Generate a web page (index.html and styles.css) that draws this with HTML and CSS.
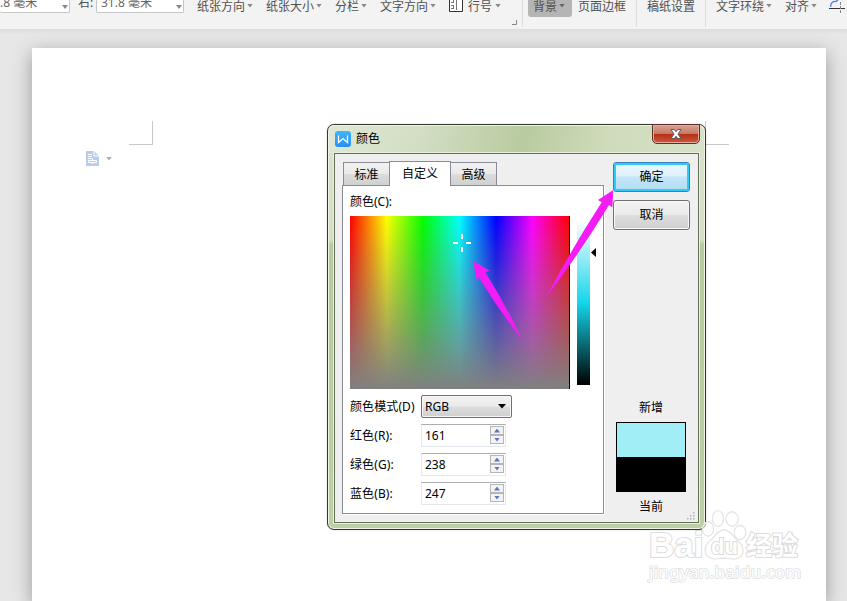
FILE: index.html
```html
<!DOCTYPE html>
<html lang="zh-CN">
<head>
<meta charset="utf-8">
<title>颜色</title>
<link rel="stylesheet" href="styles.css">
</head>
<body>
<header class="ribbon">
  <div class="measure first"><span>.8 毫米</span><i class="caret"></i></div>
  <span class="side">右:</span>
  <div class="measure"><span>31.8 毫米</span><i class="caret"></i></div>
  <span class="item">纸张方向<i class="caret"></i></span>
  <span class="item">纸张大小<i class="caret"></i></span>
  <span class="item">分栏<i class="caret"></i></span>
  <span class="item">文字方向<i class="caret"></i></span>
  <span class="item lines"><svg width="15" height="13" viewBox="0 0 15 13"><path d="M.5 0V12.5H13.5V0" fill="#fff" stroke="#333"/><path d="M2 .5H5M4.500 0V3M2 3.500H5M2 6.500H5M2 9.500H5M4.500 6V10M7.500 0V11" fill="none" stroke="#777"/></svg>行号<i class="caret"></i><svg class="launcher" width="6" height="6" viewBox="0 0 6 6"><path d="M0 4.500H4.500V0" fill="none" stroke="#888"/></svg></span>
  <i class="sep"></i>
  <span class="item active">背景<i class="caret"></i></span>
  <span class="item">页面边框</span>
  <i class="sep"></i>
  <span class="item">稿纸设置</span>
  <i class="sep"></i>
  <span class="item">文字环绕<i class="caret"></i></span>
  <span class="item">对齐<i class="caret"></i></span>
  <svg width="18" height="15" viewBox="0 0 18 15"><path d="M1.500 7C1.500 3 4 1 7 1.500L9 0" fill="none" stroke="#4a83d4" stroke-width="1.300"/><path d="M0 8.500H16" stroke="#333"/><path d="M11.500 2V13" stroke="#888" stroke-dasharray="3 1"/></svg>
</header>

<main class="workspace">
  <section class="sheet">
    <div class="marks"><i class="mark left"></i><i class="mark right"></i></div>
    <div class="paste">
      <svg width="13" height="15" viewBox="0 0 13 15"><path d="M0 0H8L13 5V15H0Z" fill="#b8cdec"/><path d="M8 0V5H13M2 3.500H6M2 5.500H6M2 7.500H6M2.500 9.500H10.500V11.500H2.500ZM6.500 8V9M6.500 12V13" fill="none" stroke="#fff"/></svg>
      <i class="caret"></i>
    </div>
  </section>
</main>

<section class="dialog">
  <div class="titlebar">
    <svg width="16" height="16" viewBox="0 0 16 16"><defs><linearGradient id="logo" x2="0" y2="1"><stop stop-color="#41b5fa"/><stop offset="1" stop-color="#258ff8"/></linearGradient></defs><rect width="16" height="16" rx="3" fill="url(#logo)"/><path d="M3.500 4.500V11.500L8 7.500L12.500 11.500V4.500" fill="none" stroke="#fff" stroke-width="1.300"/></svg>
    <h1>颜色</h1>
    <div class="close"><svg width="12" height="10" viewBox="0 0 12 10"><path d="M1 .500H4.200L6 2.700L7.800 .500H11L8 5L11 9.500H7.800L6 7.300L4.200 9.500H1L4 5Z" fill="#fff" stroke="#555966"/></svg></div>
  </div>
  <div class="client">
    <div class="tabbed">
      <div class="tabs"><span class="tab">标准</span><span class="tab selected">自定义</span><span class="tab">高级</span></div>
      <div class="panel">
        <div class="caption">颜色(C):</div>
        <div class="picker">
          <div class="spectrum"><svg class="cross" width="18" height="18" viewBox="0 0 18 18"><path d="M9 0V5M9 13V18M0 9H5M13 9H18" stroke="#fff" stroke-width="2"/></svg></div>
          <div class="shade"></div>
          <svg class="pointer" width="5" height="9" viewBox="0 0 5 9"><path d="M5 0V9L0 4.500Z"/></svg>
        </div>
        <div class="form">
          <label>颜色模式(D)</label><div class="select">RGB<svg width="8" height="5" viewBox="0 0 8 5"><path d="M0 0H8L4 4.500Z"/></svg></div>
          <label>红色(R):</label><div class="spin">161<span class="steps"><i class="up"></i><i class="down"></i></span></div>
          <label>绿色(G):</label><div class="spin">238<span class="steps"><i class="up"></i><i class="down"></i></span></div>
          <label>蓝色(B):</label><div class="spin">247<span class="steps"><i class="up"></i><i class="down"></i></span></div>
        </div>
      </div>
    </div>
    <div class="actions">
      <div class="button primary">确定</div>
      <div class="button">取消</div>
      <div class="preview">
        <span>新增</span>
        <div class="swatch"></div>
        <span>当前</span>
      </div>
    </div>
    <svg class="grip" width="8" height="8" viewBox="0 0 8 8" fill="#b5b5b5"><path d="M6 0h1.500v1.500H6zM3 3h1.500v1.500H3zM6 3h1.500v1.500H6zM0 6h1.500v1.500H0zM3 6h1.500v1.500H3zM6 6h1.500v1.500H6z"/></svg>
  </div>
</section>

<svg class="arrows" width="847" height="601" viewBox="0 0 847 601" fill="#f41cf4">
  <path d="M473.500 261L489.700 270.700L485.300 272.300Q506 305 522 339.500Q498 309 479 277.700L476 280.300Z"/>
  <path d="M613.300 190L612.300 207.500L609 205Q580 253 545.500 298Q571 250 601.700 202.300L598 200Z"/>
</svg>

<div class="watermark">
  <svg class="paw" width="46" height="50" viewBox="0 0 46 50" fill="#fff" fill-opacity=".55" stroke="#dcdcdc" stroke-width="1.300"><ellipse cx="6" cy="19" rx="5.500" ry="7"/><ellipse cx="16" cy="8.500" rx="5.500" ry="7.700"/><ellipse cx="30" cy="9" rx="6" ry="7"/><ellipse cx="38" cy="22.500" rx="5.700" ry="7"/><path d="M22 20C16 20 14 26 8 31C2 36 1 45 9 48C14 50 18 48 22 48C27 48 31 50 36 48C43 45 42 36 36 31C30 26 28 20 22 20Z"/></svg>
  <div class="brand"><b class="bai">Bai</b><b class="du">du</b><b class="exp">经验</b></div>
  <div class="url">jingyan.baidu.com</div>
</div>
</body>
</html>
```

FILE: styles.css
```css
* { box-sizing: border-box; }
body {
  margin: 0;
  width: 847px;
  height: 601px;
  overflow: hidden;
  background: #e7e7e7;
  font: 12px/16px "Noto Sans", "Noto Sans CJK SC", sans-serif;
  color: #000;
}
svg { display: block; flex: none; }

.caret {
  flex: none;
  width: 6px;
  height: 4px;
  background: #888;
  clip-path: polygon(0 0, 100% 0, 50% 100%);
}

/* Ribbon */
.ribbon {
  display: grid;
  grid-template-columns: 78px 19px 100px 69px 69px 45px 69px 73px 6px 50px 58px 11px 58px 11px 69px 44px 18px;
  align-items: start;
  height: 29px;
  background: #f3f3f3;
  color: #505050;
  white-space: nowrap;
}
.item { display: flex; align-items: center; gap: 2px; height: 16px; margin-top: -1px; }
.item .caret { margin-top: -3px; }
.measure {
  display: flex;
  justify-content: space-between;
  width: 88px;
  height: 13px;
  margin-left: -1px;
  padding-right: 4px;
  padding-left: 4px;
  background: #fff;
  border: 1px solid #c6c6c6;
  border-top: 0;
  border-radius: 0 0 2px 2px;
  color: #666;
}
.measure span, .side { margin-top: -5px; }
.measure .caret { margin-top: 5px; margin-right: -3px; }
.measure.first { width: 70px; margin-left: 0; padding-left: 0; border-left: 0; }
.lines { gap: 3px; }
.lines > svg:first-child { margin: -3px 1px 0 0; }
.launcher { align-self: end; margin: 0 0 -11px 8px; }
.sep { width: 1px; height: 27px; background: #dedede; }
.active {
  width: 44px;
  height: 18px;
  padding: 0 0 2px 5px;
  background: #b5b5b5;
  border-radius: 0 0 3px 3px;
}
.active .caret { background: #666; }

/* Document */
.workspace {
  height: 572px;
  padding: 19px 21px 0 32px;
  overflow: hidden;
  background: linear-gradient(#dcdcdc, #e7e7e7 5px);
}
.sheet { height: 553px; padding-top: 73px; background: #fff; box-shadow: 0 5px 18px #999; }
.marks { display: flex; justify-content: space-between; padding: 0 97px; }
.mark { width: 24px; height: 24px; border: 0 solid #c8c8c8; border-bottom-width: 1px; }
.left { border-right-width: 1px; }
.right { border-left-width: 1px; }
.paste { display: flex; align-items: center; gap: 7px; padding: 6px 0 0 54px; }
.paste .caret { background: #aaa; }

/* Color dialog */
.dialog {
  position: absolute;
  left: 327px;
  top: 124px;
  width: 379px;
  height: 406px;
  padding: 0 6px;
  background: linear-gradient(#d9e3cb, #d5dfc6 115px, #b8cb9e 119px, #bdcfa4);
  border: 1px solid #34382f;
  border-radius: 7px;
  box-shadow: inset 0 0 0 1px #edf3e5, 0 0 1px #777;
}
.titlebar {
  display: flex;
  align-items: center;
  height: 28px;
  margin: 0 -5px;
  padding: 0 5px 0 6px;
  border-radius: 6px 6px 0 0;
  background: linear-gradient(100deg, #dfe8d5 0, #d3dec4 24%, #b9cba0 52%, #cfdbbb 74%, #d7e1c9);
  box-shadow: inset 0 1px #edf3e5;
}
h1 { margin: -1px 0 0 5px; font-size: 12px; line-height: 16px; font-weight: 400; }
.close {
  align-self: start;
  display: grid;
  place-items: center;
  width: 48px;
  height: 20px;
  margin: -1px -1px 0 auto;
  border: 1px solid #5c302a;
  border-radius: 0 0 5px 5px;
  background: linear-gradient(#dba091, #c87b68 47%, #b52f14 51%, #ce593b);
  box-shadow: inset 0 0 0 1px #e3aaa0;
}
.client {
  position: relative;
  display: flex;
  gap: 9px;
  height: 370px;
  padding: 7px;
  background: #efefef;
  border: 1px solid #65705a;
  box-shadow: 0 0 0 1px #e7efdd;
}
.tabbed { width: 262px; }
.tabs { display: flex; align-items: flex-end; height: 24px; }
.tab {
  width: 47px;
  height: 23px;
  border: 1px solid #8b8b98;
  border-bottom: 0;
  background: linear-gradient(#f2f2f2, #e9e9e9 48%, #dcdcdc 52%, #d0d0d0);
  text-align: center;
  line-height: 24px;
}
.tab:first-child { margin-left: 1px; }
.selected { position: relative; width: 62px; height: 25px; margin: 0 -1px; margin-bottom: -1px; background: #fff; }
.panel {
  height: 329px;
  padding-left: 7px;
  background: #fff;
  border: 1px solid #8b8b98;
  box-shadow: 1px 1px #fff;
}
.caption { height: 30px; line-height: 31px; }
.picker { display: flex; }
.spectrum {
  width: 220px;
  height: 173px;
  border-right: 1px solid #000;
  background: linear-gradient(#80808000, #808080), linear-gradient(90deg, #f00, #ff0, #0f0, #0ff, #00f, #f0f, #f00);
}
.cross { margin: 18px 0 0 103px; }
.shade {
  width: 13px;
  height: 169px;
  margin-left: 7px;
  background: linear-gradient(#fff 4px, #14d5ea 87px, #000);
}
.pointer { margin: 32px 0 0 1px; }
.form {
  display: grid;
  grid-template-columns: 71px 91px;
  grid-auto-rows: 23px;
  gap: 6px 0;
  margin-top: 6px;
  line-height: 23px;
  white-space: nowrap;
}
.form label { letter-spacing: .1px; }
.select {
  display: flex;
  align-items: center;
  justify-content: space-between;
  padding: 0 5px 0 3px;
  border: 1px solid #707070;
  border-radius: 2px;
  background: linear-gradient(#f2f2f2, #ebebeb 48%, #dddddd 52%, #cfcfcf);
  box-shadow: inset 0 0 0 1px #f7f7f7;
}
.spin {
  display: flex;
  justify-content: space-between;
  width: 85px;
  padding: 1px 1px 1px 3px;
  line-height: 19px;
  border: 1px solid #e3e9ef;
  border-top-color: #abadb3;
}
.steps { display: grid; grid-template-rows: 9px 9px; gap: 0; width: 14px; height: 18px; }
.steps i { display: grid; place-items: center; height: 9px; border: 1px solid #b5b5b5; background: #f3f3f3; }
.steps i::before { content: ""; width: 6px; height: 4px; background: #5d76c4; }
.up::before { clip-path: polygon(50% 0, 100% 100%, 0 100%); }
.down::before { clip-path: polygon(0 0, 100% 0, 50% 100%); }
.actions { width: 77px; padding-top: 1px; }
.button {
  height: 30px;
  margin-bottom: 8px;
  border: 1px solid #707070;
  border-radius: 3px;
  background: linear-gradient(#f2f2f2, #ebebeb 48%, #dddddd 52%, #cfcfcf);
  box-shadow: inset 0 0 0 1px #f8f8f8;
  text-align: center;
  line-height: 28px;
}
.primary {
  border-color: #3c7fb1;
  background: linear-gradient(#eaf6fd, #def1fb 46%, #c4e6f8 50%, #b1dcf4);
  box-shadow: inset 0 0 0 2px #2bcdf8;
}
.preview { display: flex; flex-direction: column; align-items: center; width: 76px; margin-top: 170px; }
.swatch {
  width: 70px;
  height: 70px;
  margin: 6px 0 7px;
  border: 1px solid #000;
  background: linear-gradient(#a1eef7 34px, #000 34px);
}
.grip { position: absolute; right: 3px; bottom: 2px; }

/* Overlays */
.arrows { position: absolute; left: 0; top: 0; }
.watermark {
  position: absolute;
  left: 649px;
  top: 510px;
  width: 156px;
  height: 76px;
  color: #fff;
  paint-order: stroke fill;
  -webkit-text-stroke: 2px #dcdcdc;
}
.paw { position: absolute; left: 53px; top: 0; }
.brand { position: relative; display: flex; padding-top: 20px; height: 53px; line-height: 32px; font-family: "Liberation Sans", "Noto Sans CJK SC", sans-serif; }
.bai { width: 62px; font-size: 35px; line-height: 30px; }
.du { width: 35px; font-size: 22px; line-height: 34px; }
.exp { font-size: 26px; }
.url { font-size: 17px; line-height: 18px; letter-spacing: .3px; -webkit-text-stroke: 1.6px #e0e0e0; }
```
